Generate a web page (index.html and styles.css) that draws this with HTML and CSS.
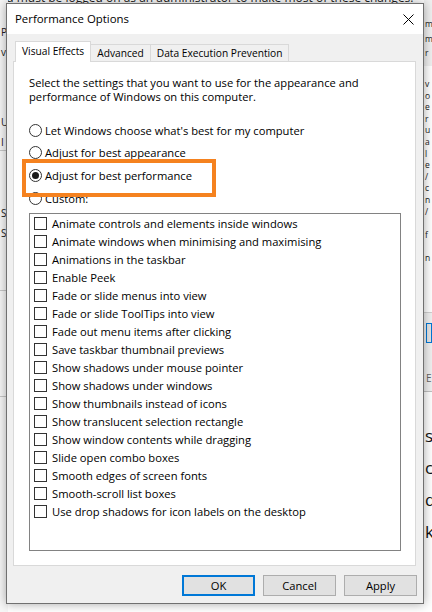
FILE: index.html
```html
<!DOCTYPE html>
<html lang="en">

<head>
  <meta charset="UTF-8">
  <meta name="viewport" content="width=device-width, initial-scale=1.0">
  <title>Performance Options</title>
  <link rel="stylesheet" href="styles.css">
</head>

<body>

  <!-- window behind the dialog, only its edges show -->
  <div class="backdrop">
    <p class="bg-top">ou must be logged on as an administrator to make most of these changes.</p>
    <div class="bg-left">
      <span style="top:25px">P</span>
      <span style="top:45px">v</span>
      <span style="top:115px">U</span>
      <span style="top:135px">I</span>
      <i style="top:150px"></i>
      <span style="top:206px">S</span>
      <span style="top:226px">S</span>
      <i style="top:290px"></i>
      <i style="top:396px"></i>
    </div>
    <div class="bg-right">
      <div class="bg-lines top-lines">
        <span>m</span><span>m</span><span>r</span>
      </div>
      <div class="bg-lines mid-lines">
        <span>v</span><span>o</span><span>e</span><span>r</span><span>u</span><span>a</span>
        <span>l</span><span>e</span><span>/</span><span>c</span><span>n</span><span>/</span>
        <span>&nbsp;</span><span>f</span><span>&nbsp;</span><span>n</span>
      </div>
      <div class="bg-panel">
        <div class="bg-btn"></div>
        <span>E</span>
      </div>
      <div class="bg-big">
        <span>s</span><span>c</span><span>d</span><span>k</span>
      </div>
    </div>
  </div>

  <div class="dialog">
    <div class="titlebar">
      <span class="title">Performance Options</span>
      <svg class="close" width="11" height="11" viewBox="0 0 11 11">
        <path d="M0.5 0.5L10.5 10.5M10.5 0.5L0.5 10.5" stroke="#000" stroke-width="1" fill="none" />
      </svg>
    </div>

    <div class="tabs">
      <div class="tab active">Visual Effects</div>
      <div class="tab">Advanced</div>
      <div class="tab">Data Execution Prevention</div>
    </div>

    <div class="panel">
      <p class="intro">Select the settings that you want to use for the appearance and<br>performance of Windows on this computer.</p>

      <div class="options">
        <div class="radio"><span class="circle"></span>Let Windows choose what's best for my computer</div>
        <div class="radio"><span class="circle"></span>Adjust for best appearance</div>
        <div class="radio checked marked"><span class="circle"></span>Adjust for best performance</div>
        <div class="radio"><span class="circle"></span>Custom:</div>
      </div>

      <div class="listbox">
        <div class="check"><span class="box"></span>Animate controls and elements inside windows</div>
        <div class="check"><span class="box"></span>Animate windows when minimising and maximising</div>
        <div class="check"><span class="box"></span>Animations in the taskbar</div>
        <div class="check"><span class="box"></span>Enable Peek</div>
        <div class="check"><span class="box"></span>Fade or slide menus into view</div>
        <div class="check"><span class="box"></span>Fade or slide ToolTips into view</div>
        <div class="check"><span class="box"></span>Fade out menu items after clicking</div>
        <div class="check"><span class="box"></span>Save taskbar thumbnail previews</div>
        <div class="check"><span class="box"></span>Show shadows under mouse pointer</div>
        <div class="check"><span class="box"></span>Show shadows under windows</div>
        <div class="check"><span class="box"></span>Show thumbnails instead of icons</div>
        <div class="check"><span class="box"></span>Show translucent selection rectangle</div>
        <div class="check"><span class="box"></span>Show window contents while dragging</div>
        <div class="check"><span class="box"></span>Slide open combo boxes</div>
        <div class="check"><span class="box"></span>Smooth edges of screen fonts</div>
        <div class="check"><span class="box"></span>Smooth-scroll list boxes</div>
        <div class="check"><span class="box"></span>Use drop shadows for icon labels on the desktop</div>
      </div>
    </div>

    <div class="buttons">
      <button class="btn default">OK</button>
      <button class="btn">Cancel</button>
      <button class="btn">Apply</button>
    </div>
  </div>

</body>

</html>
```

FILE: styles.css
```css
* {
  box-sizing: border-box;
}

html,
body {
  margin: 0;
  padding: 0;
}

body {
  width: 432px;
  height: 612px;
  overflow: hidden;
  position: relative;
  background: #fff;
  color: #000;
  font-family: "Open Sans", "Noto Sans", sans-serif;
  font-size: 11.2px;
}

/* ---------- background window ---------- */

.backdrop {
  position: absolute;
  top: 0;
  left: 0;
  width: 432px;
  height: 612px;
}

.bg-top {
  position: absolute;
  top: -9px;
  left: -1px;
  margin: 0;
  font-size: 12px;
  line-height: 14px;
  white-space: nowrap;
  color: #1e1e1e;
}

.bg-left {
  position: absolute;
  top: 0;
  left: 0;
  width: 8px;
  height: 612px;
  background: #f7f7f7;
}

.bg-left span {
  position: absolute;
  left: 1px;
  font-size: 10px;
  line-height: 14px;
  color: #222;
}

.bg-left i {
  position: absolute;
  left: 0;
  width: 8px;
  height: 1px;
  background: #c8c8c8;
}

.bg-right {
  position: absolute;
  top: 0;
  left: 424px;
  width: 8px;
  height: 612px;
  background: #fff;
  overflow: hidden;
}

.bg-lines {
  display: flex;
  flex-direction: column;
  padding-left: 1px;
  color: #222;
  white-space: nowrap;
}

.top-lines {
  background: #f0f0f0;
  padding-top: 17px;
  height: 66px;
  font-size: 8.5px;
  line-height: 14.5px;
}

.mid-lines {
  padding-top: 12px;
  height: 246px;
  font-size: 8.5px;
  line-height: 11.6px;
}

.bg-panel {
  height: 80px;
  background: #f0f0f0;
  border-top: 1px solid #d0d0d0;
  border-bottom: 1px solid #c0c0c0;
  padding: 10px 0 0 2px;
  font-size: 10px;
  color: #666;
}

.bg-btn {
  height: 20px;
  border: 1px solid #0078d7;
  background: #e5e5e5;
  margin-bottom: 28px;
}

.bg-big {
  display: flex;
  flex-direction: column;
  padding: 28px 0 0 1px;
  font-size: 17px;
  line-height: 32px;
  color: #111;
}

/* ---------- dialog ---------- */

.dialog {
  position: absolute;
  top: 3px;
  left: 6px;
  width: 418px;
  height: 601px;
  background: #f0f0f0;
  border: 1px solid #707070;
  box-shadow: 0 0 10px rgba(0, 0, 0, 0.35);
  display: flex;
  flex-direction: column;
}

.titlebar {
  height: 30px;
  flex-shrink: 0;
  background: #fff;
  display: flex;
  align-items: center;
  justify-content: space-between;
  padding: 0 9px 0 8px;
}

.title {
  font-size: 11.4px;
  line-height: 16px;
}

.close {
  display: block;
}

.tabs {
  height: 27px;
  flex-shrink: 0;
  display: flex;
  align-items: flex-end;
  padding: 7px 0 0 8px;
  font-size: 10.2px;
}

.tab {
  height: 17px;
  padding: 0 6px;
  line-height: 16px;
  background: #f0f0f0;
  border: 1px solid #d9d9d9;
  border-bottom: none;
  white-space: nowrap;
}

.tab + .tab {
  border-left: none;
}

.tab.active {
  height: 21px;
  line-height: 18px;
  margin-bottom: -1px;
  background: #fff;
  position: relative;
  z-index: 1;
}

.panel {
  height: 505px;
  flex-shrink: 0;
  margin: 0 7px 0 6px;
  background: #fff;
  border: 1px solid #d9d9d9;
  padding: 14px 14px 0 15px;
}

.intro {
  margin: 0;
  line-height: 14px;
}

.options {
  margin-top: 15px;
}

.radio {
  height: 22.67px;
  display: flex;
  align-items: center;
  white-space: nowrap;
}

.circle {
  width: 13px;
  height: 13px;
  margin-right: 3px;
  border: 1px solid #333;
  border-radius: 50%;
  background: #fff;
  display: flex;
  align-items: center;
  justify-content: center;
}

.radio.checked .circle::before {
  content: "";
  width: 7px;
  height: 7px;
  border-radius: 50%;
  background: #1a1a1a;
}

/* orange annotation frame */
.radio.marked {
  position: relative;
}

.radio.marked::after {
  content: "";
  position: absolute;
  left: -7px;
  top: -5px;
  width: 186px;
  height: 30px;
  border: 4px solid #f5821f;
}

.listbox {
  width: 372px;
  height: 338px;
  margin-top: 3px;
  border: 1px solid #828282;
  padding: 1px 0 0 4px;
}

.check {
  height: 18px;
  display: flex;
  align-items: center;
  white-space: nowrap;
}

.box {
  width: 13px;
  height: 13px;
  margin-right: 5px;
  border: 1px solid #333;
  background: #fff;
}

.buttons {
  display: flex;
  justify-content: flex-end;
  gap: 8px;
  padding: 9px 6px 0 0;
}

.btn {
  width: 73px;
  height: 21px;
  padding: 0;
  font-family: inherit;
  font-size: 11.2px;
  color: #000;
  background: #e1e1e1;
  border: 1px solid #adadad;
}

.btn.default {
  border: 2px solid #0078d7;
}
```
